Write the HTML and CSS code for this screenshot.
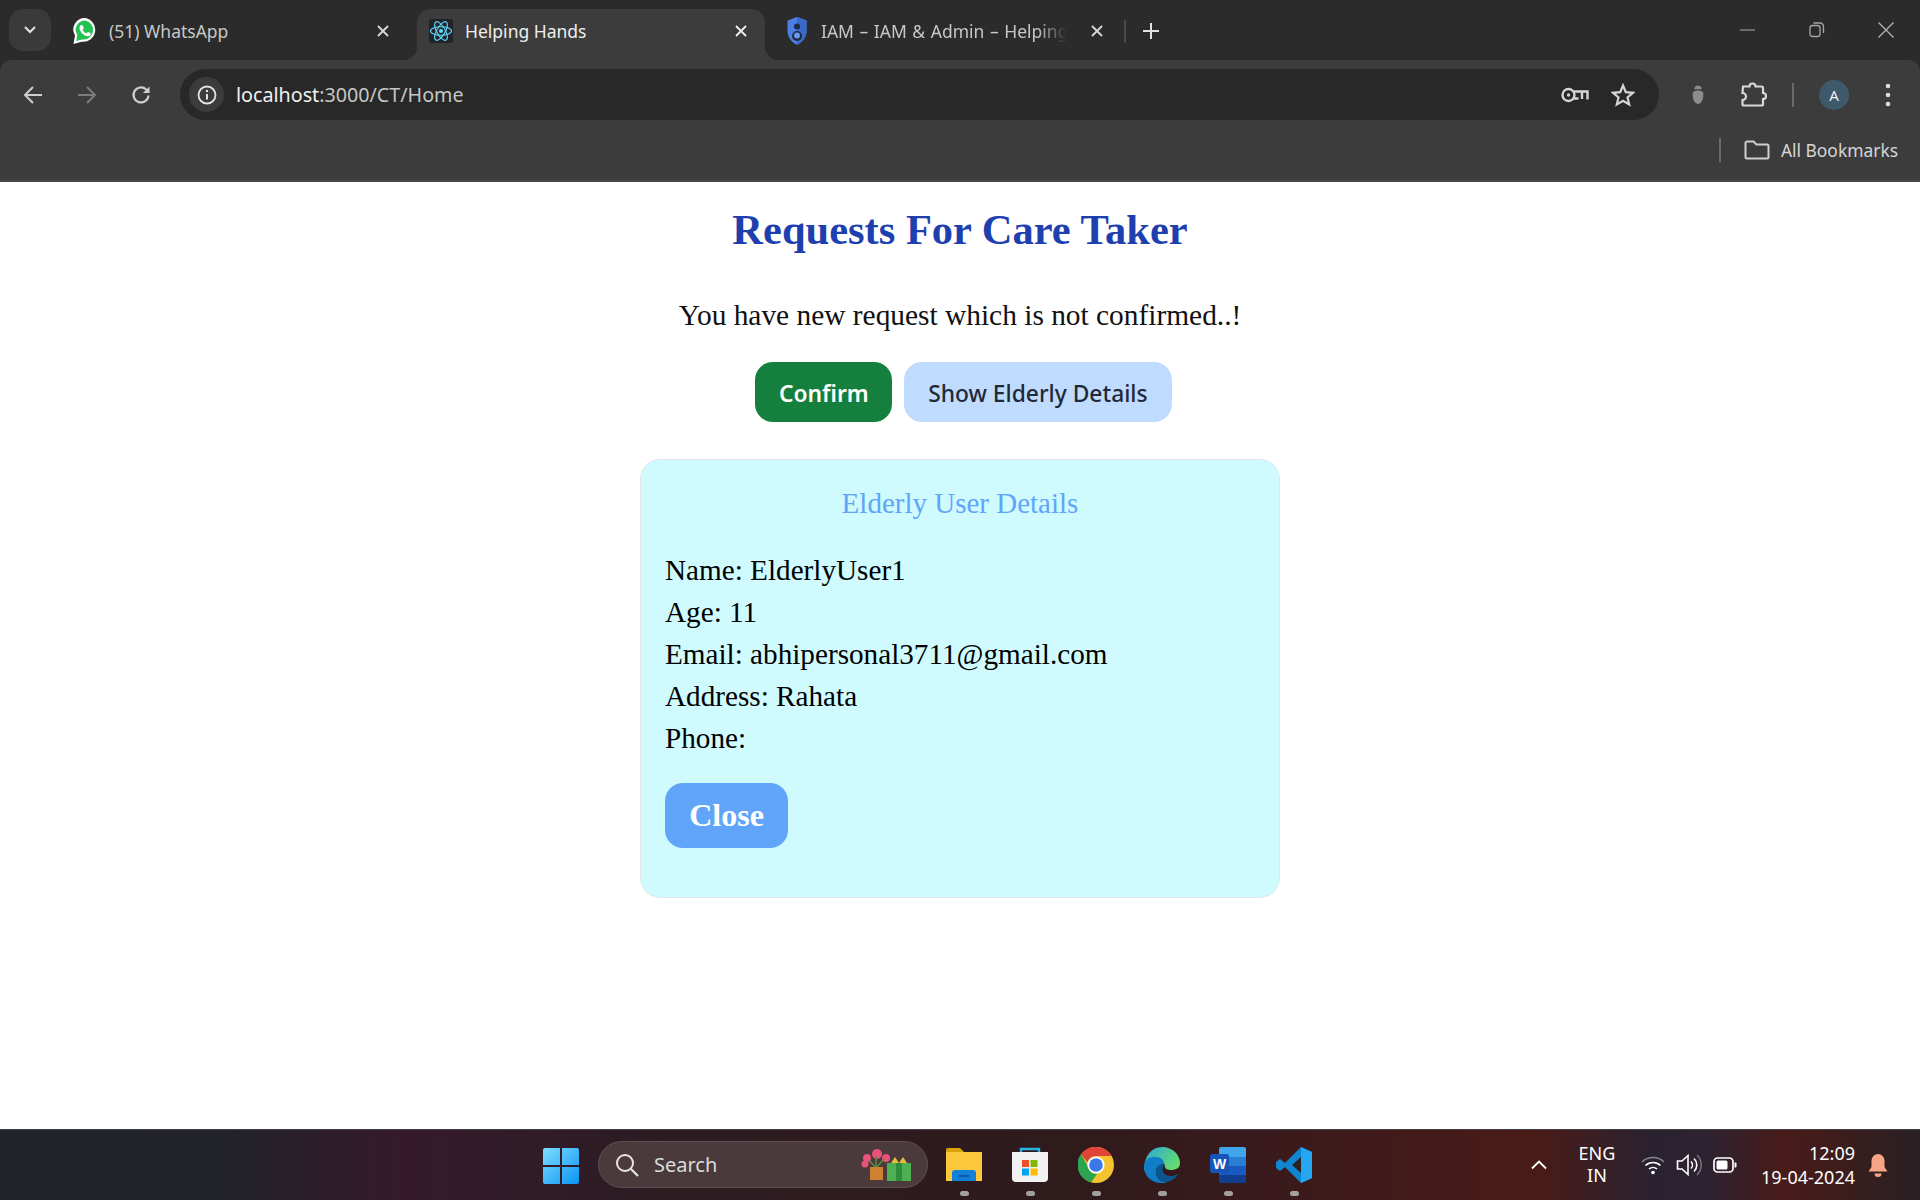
FILE: index.html
```html
<!DOCTYPE html>
<html lang="en">
<head>
<meta charset="utf-8">
<title>Helping Hands</title>
<link rel="stylesheet" href="styles.css">
</head>
<body>
<div class="browser">
  <header class="tabstrip">
    <button class="tab-search"><svg width="14" height="10" viewBox="0 0 14 10"><path d="M2 2l5 5 5-5" fill="none" stroke="#e3e3e3" stroke-width="2"/></svg></button>
    <div class="tab">
      <svg class="fav" viewBox="0 0 24 28"><path d="M12 1a11.6 11.6 0 0 0-10 17.6L.5 27l8-2.300A11.8 11.8 0 1 0 12 1z" fill="#fff"/><path d="M12 3.500a9.300 9.300 0 0 0-7.800 14.300L3.300 24l5.700-1.600A9.400 9.400 0 1 0 12 3.500z" fill="#25c252"/><path d="M8.500 8c-.8 0-2 1.200-2 3 0 3.500 4.500 8.300 8.500 8.300 1.800 0 3-1.300 3-2.300 0-.7-2.500-2-3-2-.6 0-1 1.200-1.500 1.200-1.200 0-3.700-2.500-3.700-3.500 0-.6 1-1 1-1.600 0-.5-1.200-3.100-1.800-3.100z" fill="#fff"/></svg>
      <span class="tab-title">(51) WhatsApp</span>
      <svg class="tab-x" viewBox="0 0 12 12"><path d="M1 1l10 10M11 1L1 11" stroke="#d8d8d8" stroke-width="1.800"/></svg>
    </div>
    <div class="tab tab-active">
      <svg class="fav" viewBox="0 0 24 24"><rect width="24" height="24" rx="3" fill="#20232a"/><g fill="none" stroke="#61dafb" stroke-width="1.100"><ellipse cx="12" cy="12" rx="10.500" ry="4.200"/><ellipse cx="12" cy="12" rx="10.500" ry="4.200" transform="rotate(60 12 12)"/><ellipse cx="12" cy="12" rx="10.500" ry="4.200" transform="rotate(120 12 12)"/></g><circle cx="12" cy="12" r="2.100" fill="#61dafb"/></svg>
      <span class="tab-title">Helping Hands</span>
      <svg class="tab-x" viewBox="0 0 12 12"><path d="M1 1l10 10M11 1L1 11" stroke="#f0f0f0" stroke-width="1.800"/></svg>
    </div>
    <div class="tab tab-third">
      <svg class="fav fav-shield" viewBox="0 0 20 28"><path d="M10 0l9.500 3.500V14c0 6.500-4 11-9.500 14C4.500 25 .5 20.500.5 14V3.500z" fill="#4a7fe6"/><path d="M10 0l9.500 3.500V14c0 6.500-4 11-9.500 14z" fill="#3a68c9"/><circle cx="10" cy="9.500" r="3" fill="#1f2a44"/><path d="M10 14a5 5 0 0 1 5 5 5 5 0 0 1-10 0 5 5 0 0 1 5-5z" fill="#1f2a44"/><circle cx="10" cy="18.500" r="3" fill="#6f97e8"/></svg>
      <span class="tab-title tab-fade">IAM – IAM &amp; Admin – Helping</span>
      <svg class="tab-x" viewBox="0 0 12 12"><path d="M1 1l10 10M11 1L1 11" stroke="#d8d8d8" stroke-width="1.800"/></svg>
    </div>
    <span class="tab-sep"></span>
    <svg class="new-tab" viewBox="0 0 16 16"><path d="M8 0v16M0 8h16" stroke="#e3e3e3" stroke-width="2"/></svg>
    <div class="window-controls">
      <svg viewBox="0 0 16 16"><path d="M0 8h15" stroke="#8f8f8f" stroke-width="1.300"/></svg>
      <svg viewBox="0 0 16 16"><rect x="1" y="3.500" width="10" height="11" rx="2.500" fill="none" stroke="#a5a5a5" stroke-width="1.300"/><path d="M4.500 1h6.500a3.500 3.500 0 0 1 3.500 3.500V11" fill="none" stroke="#a5a5a5" stroke-width="1.300"/></svg>
      <svg viewBox="0 0 16 16"><path d="M.5.500l15 15M15.500.500l-15 15" stroke="#b5b5b5" stroke-width="1.300"/></svg>
    </div>
  </header>

  <nav class="toolbar">
    <div class="nav-buttons">
      <svg viewBox="0 0 20 20"><path d="M19 10H2M10 2l-8 8 8 8" fill="none" stroke="#cfcfcf" stroke-width="2"/></svg>
      <svg viewBox="0 0 20 20"><path d="M1 10h17M10 2l8 8-8 8" fill="none" stroke="#7c7c7c" stroke-width="2"/></svg>
      <svg viewBox="0 0 20 20"><path d="M17.500 10.500a7.500 7.500 0 1 1-2.300-6L18 7" fill="none" stroke="#cfcfcf" stroke-width="2.200"/><path d="M18.500 1.500V8H12z" fill="#cfcfcf"/></svg>
    </div>
    <div class="omnibox">
      <span class="site-info"><svg viewBox="0 0 20 20" width="20" height="20"><circle cx="10" cy="10" r="8.500" fill="none" stroke="#e3e3e3" stroke-width="1.800"/><path d="M10 9v5.500" stroke="#e3e3e3" stroke-width="2"/><circle cx="10" cy="6" r="1.200" fill="#e3e3e3"/></svg></span>
      <span class="url"><span class="url-host">localhost</span>:3000/CT/Home</span>
      <svg class="omni-key" viewBox="0 0 28 16"><circle cx="7.500" cy="8" r="6" fill="none" stroke="#d5d5d5" stroke-width="2.400"/><circle cx="7.500" cy="8" r="1.700" fill="#d5d5d5"/><path d="M13 4.500h13.500v8M21 4.500v7.500M13 11.500h4.500" fill="none" stroke="#d5d5d5" stroke-width="2.400"/></svg>
      <svg class="omni-star" viewBox="0 0 24 24"><path d="M12 2.500l2.800 6.700 7.200.6-5.500 4.700 1.700 7L12 17.700l-6.200 3.800 1.700-7L2 9.800l7.200-.6z" fill="none" stroke="#d5d5d5" stroke-width="2.200"/></svg>
    </div>
    <div class="toolbar-right">
      <svg class="tb-bug" viewBox="0 0 20 24"><path d="M6 5.500a4 4 0 0 1 8 0z" fill="#8c8c8c"/><path d="M4 11c0-3 2.500-4 6-4s6 1 6 4c0 7-3 11-6 11s-6-4-6-11z" fill="#8c8c8c"/></svg>
      <svg class="tb-ext" viewBox="0 0 26 26"><path d="M2 4.500h6.500a3 3 0 0 1 6 0h6a1.500 1.500 0 0 1 1.500 1.500v5a3 3 0 0 1 0 6v5a1.500 1.500 0 0 1-1.500 1.500H3a1.500 1.500 0 0 1-1.500-1.500v-4a3.500 3.500 0 0 0 0-7z" fill="none" stroke="#d8d8d8" stroke-width="2.200"/></svg>
      <span class="tb-sep"></span>
      <span class="avatar">A</span>
      <svg class="tb-dots" viewBox="0 0 6 24"><circle cx="3" cy="3" r="2.300" fill="#dcdcdc"/><circle cx="3" cy="12" r="2.300" fill="#dcdcdc"/><circle cx="3" cy="21" r="2.300" fill="#dcdcdc"/></svg>
    </div>
  </nav>

  <div class="bookmarks">
    <span class="bm-sep"></span>
    <svg class="bm-folder" viewBox="0 0 26 20"><path d="M1.500 3a1.500 1.500 0 0 1 1.500-1.500h6.500l3 3H23A1.500 1.500 0 0 1 24.500 6v11a1.500 1.500 0 0 1-1.500 1.500H3A1.500 1.500 0 0 1 1.500 17z" fill="none" stroke="#cfcfcf" stroke-width="2"/></svg>
    <span class="bm-label">All Bookmarks</span>
  </div>
</div>

<main class="page">
  <h1 class="title">Requests For Care Taker</h1>
  <p class="notice">You have new request which is not confirmed..!</p>
  <div class="actions">
    <button class="btn btn-confirm">Confirm</button>
    <button class="btn btn-show">Show Elderly Details</button>
  </div>
  <section class="card">
    <h2 class="card-title">Elderly User Details</h2>
    <p class="line">Name: ElderlyUser1</p>
    <p class="line">Age: 11</p>
    <p class="line">Email: abhipersonal3711@gmail.com</p>
    <p class="line">Address: Rahata</p>
    <p class="line">Phone:</p>
    <button class="btn-close">Close</button>
  </section>
</main>

<footer class="taskbar">
  <div class="task-center">
    <svg class="win-logo" viewBox="0 0 36 36"><defs><linearGradient id="wl" x1="0" y1="0" x2="1" y2="1"><stop offset="0" stop-color="#7fdcff"/><stop offset="1" stop-color="#0a94f5"/></linearGradient></defs><path d="M0 2a2 2 0 0 1 2-2h15v17H0zM19 0h15a2 2 0 0 1 2 2v15H19zM0 19h17v17H2a2 2 0 0 1-2-2zM19 19h17v15a2 2 0 0 1-2 2H19z" fill="url(#wl)"/></svg>
    <div class="search">
      <svg class="search-icon" viewBox="0 0 24 24"><circle cx="10" cy="10" r="8" fill="none" stroke="#e6e6e6" stroke-width="2"/><path d="M16 16l7 7" stroke="#e6e6e6" stroke-width="2.200"/></svg>
      <span class="search-label">Search</span>
      <svg class="search-art" viewBox="0 0 50 34"><g fill="#e8537a"><circle cx="6" cy="10" r="4"/><circle cx="16" cy="6" r="5"/><circle cx="25" cy="10" r="4"/><circle cx="4" cy="16" r="3.500"/></g><path d="M15 20L8 12M15 20V8M15 20l8-9" stroke="#5b8f3d" stroke-width="1.500" fill="none"/><path d="M9 19h13v13H9z" fill="#cf8030"/><path d="M26 15h24v18H26z" fill="#4db052"/><path d="M35 15h6v18h-6z" fill="#2d8d3a"/><path d="M30 15l4-6 4 6 4-6 4 6z" fill="#e6bf3a"/></svg>
    </div>
    <div class="apps">
      <div class="app">
        <svg viewBox="0 0 36 36"><path d="M0 3a2 2 0 0 1 2-2h12l4 4H0z" fill="#d9a408"/><path d="M0 5h36v29H0z" fill="#fcc93c"/><path d="M6 34V26a3 3 0 0 1 3-3h18a3 3 0 0 1 3 3v8z" fill="#1080d8"/><path d="M13 29h10" stroke="#0b5aa8" stroke-width="2"/></svg><span class="app-dot"></span>
      </div>
      <div class="app">
        <svg viewBox="0 0 36 36"><path d="M9 6V2h18v4" fill="none" stroke="#28b4ea" stroke-width="2.400"/><path d="M0 5h36v26a4 4 0 0 1-4 4H4a4 4 0 0 1-4-4z" fill="#f2f2f2"/><path d="M10 13h7v7h-7z" fill="#f2502a"/><path d="M18.500 13h7v7h-7z" fill="#7fba00"/><path d="M10 21.500h7v7h-7z" fill="#00a4ef"/><path d="M18.500 21.500h7v7h-7z" fill="#ffb900"/></svg><span class="app-dot"></span>
      </div>
      <div class="app">
        <svg viewBox="0 0 36 36"><circle cx="18" cy="18" r="18" fill="#f4c430"/><path d="M18 0a18 18 0 0 1 15.600 9H18a9 9 0 0 0-8.600 6.500L3 7a18 18 0 0 1 15-7z" fill="#df4437"/><path d="M3 7l8.200 14.500a8 8 0 0 0 8 5.500L13 35.300A18 18 0 0 1 3 7z" fill="#2fa450"/><circle cx="18" cy="18" r="8.600" fill="#fff"/><circle cx="18" cy="18" r="6.800" fill="#3b78e7"/></svg><span class="app-dot"></span>
      </div>
      <div class="app">
        <svg viewBox="0 0 36 36"><defs><linearGradient id="ed" x1="0" y1="0" x2="1" y2=".6"><stop offset="0" stop-color="#2aa6dc"/><stop offset="1" stop-color="#63dd6e"/></linearGradient></defs><path d="M18 0c11 0 18 8 18 16 0 5-4 7-9 7-3 0-6-1-6-3 0-6-6-8-11-6-4 2-8 6-10 10C0 8 8 0 18 0z" fill="url(#ed)"/><path d="M0 20c0-7 6-11 12-10 6 0 9 5 8 7-5 0-9 4-8 10 1 5 5 8 11 8-2 1-3 1-6 1C8 36 0 29 0 20z" fill="#0f7ec7"/><path d="M20 17c-5 0-9 4-8 10 1 5 5 8 11 8 5-1 9-4 11-8-4 2-8 3-12 1-4-2-4-7-2-11z" fill="#0b568f"/></svg><span class="app-dot"></span>
      </div>
      <div class="app">
        <svg viewBox="0 0 36 36"><path d="M9 2a2 2 0 0 1 2-2h23a2 2 0 0 1 2 2v8H9z" fill="#41a5ee"/><path d="M9 10h27v9H9z" fill="#2b7cd3"/><path d="M9 19h27v9H9z" fill="#185abd"/><path d="M9 28h27v6a2 2 0 0 1-2 2H11a2 2 0 0 1-2-2z" fill="#103f91"/><rect y="7" width="19" height="19" rx="2" fill="#1654b8"/><text class="word-w" x="9.500" y="22">W</text></svg><span class="app-dot"></span>
      </div>
      <div class="app">
        <svg viewBox="0 0 36 36"><path d="M25 0l11 5v26l-11 5L9 20l-5 4-4-3v-6l4-3 5 4z" fill="#0f86d2"/><path d="M25 0l11 5v26l-11 5z" fill="#24a6f0"/><path d="M25 10l-9 8 9 8z" fill="#2b2122"/></svg><span class="app-dot"></span>
      </div>
    </div>
  </div>
  <div class="tray">
    <svg class="tray-up" viewBox="0 0 16 10"><path d="M1 8.500l7-7 7 7" fill="none" stroke="#fff" stroke-width="1.800"/></svg>
    <div class="lang"><span>ENG</span><span>IN</span></div>
    <svg class="tray-wifi" viewBox="0 0 24 20"><path d="M1 7a16 16 0 0 1 22 0" fill="none" stroke="#8a8590" stroke-width="1.500"/><path d="M4.500 10.500a11 11 0 0 1 15 0M8 14a6 6 0 0 1 8 0" fill="none" stroke="#fff" stroke-width="1.600"/><circle cx="12" cy="17.500" r="1.800" fill="#fff"/></svg>
    <svg class="tray-vol" viewBox="0 0 26 24"><path d="M1.500 8h4.500l6-5.500v19L6 16H1.500z" fill="none" stroke="#fff" stroke-width="1.600"/><path d="M15 8.500a5 5 0 0 1 0 7M18 5.500a9 9 0 0 1 0 13" fill="none" stroke="#fff" stroke-width="1.600"/><path d="M21 2a14 14 0 0 1 0 20" fill="none" stroke="#77727c" stroke-width="1.500"/></svg>
    <svg class="tray-bat" viewBox="0 0 24 16"><rect x="1" y="1" width="19" height="14" rx="3.500" fill="none" stroke="#fff" stroke-width="1.700"/><rect x="3.500" y="3.500" width="11" height="9" rx="1.500" fill="#fff"/><path d="M21.500 5.500h1a1 1 0 0 1 1 1v3a1 1 0 0 1-1 1h-1z" fill="#fff"/></svg>
    <div class="clock"><span>12:09</span><span>19-04-2024</span></div>
    <svg class="tray-bell" viewBox="0 0 20 24"><path d="M10 1a6.500 6.500 0 0 1 6.500 6.500V14l3 4.500H.5l3-4.500V7.500A6.500 6.500 0 0 1 10 1z" fill="#f8a585"/><path d="M6.500 20.500h7a3.500 3.500 0 0 1-7 0z" fill="#f8a585"/></svg>
  </div>
</footer>
</body>
</html>
```
FILE: styles.css
```css
* { box-sizing: border-box; }
html, body { height: 100%; }
body {
  margin: 0;
  display: flex;
  flex-direction: column;
  height: 1200px;
  overflow: hidden;
  background: #fff;
  font-family: "Noto Sans", sans-serif;
}
svg { display: block; flex: none; }

/* browser chrome */
.browser { flex: none; height: 182px; background: #2b2b2b; display: flex; flex-direction: column; }
.tabstrip { height: 60px; display: flex; align-items: flex-start; padding: 9px 0 0 9px; gap: 10px; flex: none; }
.tab-search { width: 42px; height: 42px; margin-right: -2px; border: 0; border-radius: 14px; background: #3a3a3a; display: flex; align-items: center; justify-content: center; padding: 0; }
.tab { position: relative; width: 348px; height: 51px; display: flex; align-items: center; padding: 0 12px 8px 14px; color: #c7c7c7; border-radius: 14px 14px 0 0; }
.tab-active { background: #3c3c3c; color: #eee; padding-left: 12px; }
.tab-active::before, .tab-active::after { content: ""; position: absolute; bottom: 0; width: 14px; height: 14px; }
.tab-active::before { left: -14px; background: radial-gradient(circle at 0 0, transparent 14px, #3c3c3c 14.5px); }
.tab-active::after { right: -14px; background: radial-gradient(circle at 100% 0, transparent 14px, #3c3c3c 14.5px); }
.fav { width: 24px; height: 28px; margin-right: 12px; }
.tab-active .fav { height: 24px; }
.fav-shield { width: 20px; margin-right: 14px; }
.tab-title { font-size: 17.500px; line-height: 26px; white-space: nowrap; flex: 1; overflow: hidden; }
.tab-fade { flex: none; width: 246px; word-spacing: 1px; -webkit-mask-image: linear-gradient(90deg, #000 88%, transparent 100%); mask-image: linear-gradient(90deg, #000 88%, transparent 100%); }
.tab-x { width: 12px; height: 12px; margin-right: 6px; }
.tab-third .tab-x { margin-left: 24px; }
.tab-third { width: 340px; padding-left: 12px; }
.tab-sep { width: 2px; height: 23px; background: #4a4a4a; margin: 11px 0 0 -1px; }
.new-tab { width: 16px; height: 16px; margin: 14px 0 0 7px; }
.window-controls { margin-left: auto; display: flex; gap: 53px; padding: 13px 26px 0 0; }
.window-controls svg { width: 16px; height: 16px; }

.toolbar { flex: none; height: 60px; background: #3c3c3c; border-radius: 12px 12px 0 0; display: flex; align-items: flex-start; padding: 0 0 0 23px; }
.nav-buttons { display: flex; gap: 34px; width: 157px; margin-top: 25px; }
.nav-buttons svg { width: 20px; height: 20px; }
.omnibox { width: 1479px; height: 51px; margin-top: 9px; border-radius: 26px; background: #282828; display: flex; align-items: center; padding: 0 24px 0 9px; }
.site-info { width: 35px; height: 35px; border-radius: 50%; background: #3c3c3c; display: flex; align-items: center; justify-content: center; }
.url { margin-left: 12px; font-size: 19.700px; line-height: 26px; color: #c4c7c5; flex: 1; white-space: nowrap; }
.url-host { color: #f0f0f0; }
.omni-key { width: 28px; height: 16px; margin-right: 22px; }
.omni-star { width: 24px; height: 24px; }
.toolbar-right { display: flex; align-items: center; margin-top: 17px; height: 36px; margin-left: 30px; }
.tb-bug { width: 18px; height: 22px; }
.tb-ext { width: 26px; height: 26px; margin-left: 34px; }
.tb-sep { width: 2px; height: 24px; background: #6a6a6a; margin-left: 25px; }
.avatar { width: 30px; height: 30px; border-radius: 50%; background: #3e5a6a; color: #eee; font-size: 15px; display: flex; align-items: center; justify-content: center; margin-left: 25px; }
.tb-dots { width: 6px; height: 24px; margin-left: 36px; }

.bookmarks { flex: 1; background: #3c3c3c; border-bottom: 2px solid #474747; display: flex; align-items: center; padding: 0 22px 1px 0; justify-content: flex-end; }
.bm-sep { width: 2px; height: 24px; background: #6a6a6a; margin-right: 23px; }
.bm-folder { width: 26px; height: 20px; margin-right: 11px; }
.bm-label { font-size: 17.400px; line-height: 24px; color: #d6d6d6; white-space: nowrap; }

/* page */
.page { flex: 1; min-height: 0; background: #fff; display: flex; flex-direction: column; align-items: center; font-family: "Liberation Serif", serif; }
.title { margin: 25px 0 0; font-size: 42.500px; line-height: 46px; font-weight: 700; color: #1e40af; }
.notice { margin: 42px 0 0; font-size: 29.400px; line-height: 40px; color: #111; }
.actions { display: flex; gap: 12px; margin: 27px 0 0 7px; }
.btn { height: 60px; border: 0; border-radius: 18px; font-family: "Noto Sans", sans-serif; font-size: 22.800px; font-weight: 500; padding: 2px 24px 0; }
.btn-confirm { background: #15803d; color: #fff; font-weight: 600; padding: 2px 23.500px 0; }
.btn-show { background: #bfdbfe; color: #1f2937; }
.card { margin-top: 37px; width: 640px; height: 439px; padding: 22px 24px 25px; border: 1px solid #e2e8ea; border-radius: 20px; background: #cffafe; }
.card-title { margin: 0 0 25px; text-align: center; font-size: 29px; line-height: 42px; font-weight: 400; color: #60a5fa; }
.line { margin: 0; font-size: 29.200px; line-height: 42px; color: #000; }
.btn-close { display: block; margin-top: 24px; width: 123px; height: 65px; border: 0; border-radius: 18px; background: #60a5fa; color: #fff; font-family: "Liberation Serif", serif; font-size: 32px; font-weight: 700; padding: 0; }

/* taskbar */
.taskbar {
  flex: none;
  height: 71px;
  display: flex;
  align-items: flex-start;
  border-top: 1px solid #46424a;
  background: linear-gradient(90deg, #20242a 0, #22222a 12%, #361a2c 21%, #2c1c22 34%, #2f1a1c 55%, #3c1a1c 68%, #491b17 80%, #2a2230 86%, #2d2230 89%, #481b18 93%, #2a2024 100%);
  color: #fff;
  padding-left: 543px;
}
.task-center { display: flex; align-items: flex-start; }
.win-logo { width: 36px; height: 36px; margin-top: 18px; }
.search { width: 330px; height: 47px; margin: 11px 0 0 19px; border-radius: 24px; background: #4b3a3c; border: 1px solid #5f5052; display: flex; align-items: center; padding: 0 16px 0 16px; }
.search-icon { width: 24px; height: 24px; }
.search-label { margin-left: 15px; font-size: 20px; color: #dcdcdc; flex: 1; }
.search-art { width: 50px; height: 34px; }
.apps { display: flex; gap: 30px; margin-left: 18px; }
.app { width: 36px; display: flex; flex-direction: column; align-items: center; margin-top: 17px; }
.app svg { width: 36px; height: 36px; }
.app-dot { width: 9px; height: 5px; border-radius: 3px; background: #a3a0a0; margin-top: 8px; }
.word-w { font-family: "Liberation Sans", sans-serif; font-size: 14px; font-weight: 700; fill: #fff; text-anchor: middle; }
.tray { display: flex; align-items: flex-start; margin-left: 219px; }
.tray-up { width: 16px; height: 10px; margin-top: 30px; }
.lang { width: 50px; margin: 12px 0 0 25px; display: flex; flex-direction: column; align-items: center; font-size: 18px; line-height: 22px; }
.tray-wifi { width: 24px; height: 20px; margin: 25px 0 0 19px; }
.tray-vol { width: 26px; height: 24px; margin: 23px 0 0 11px; }
.tray-bat { width: 24px; height: 16px; margin: 27px 0 0 11px; }
.clock { width: 118px; margin: 11px 0 0 0; display: flex; flex-direction: column; align-items: flex-end; font-size: 18px; line-height: 24px; }
.tray-bell { width: 20px; height: 24px; margin: 23px 0 0 13px; }
```
